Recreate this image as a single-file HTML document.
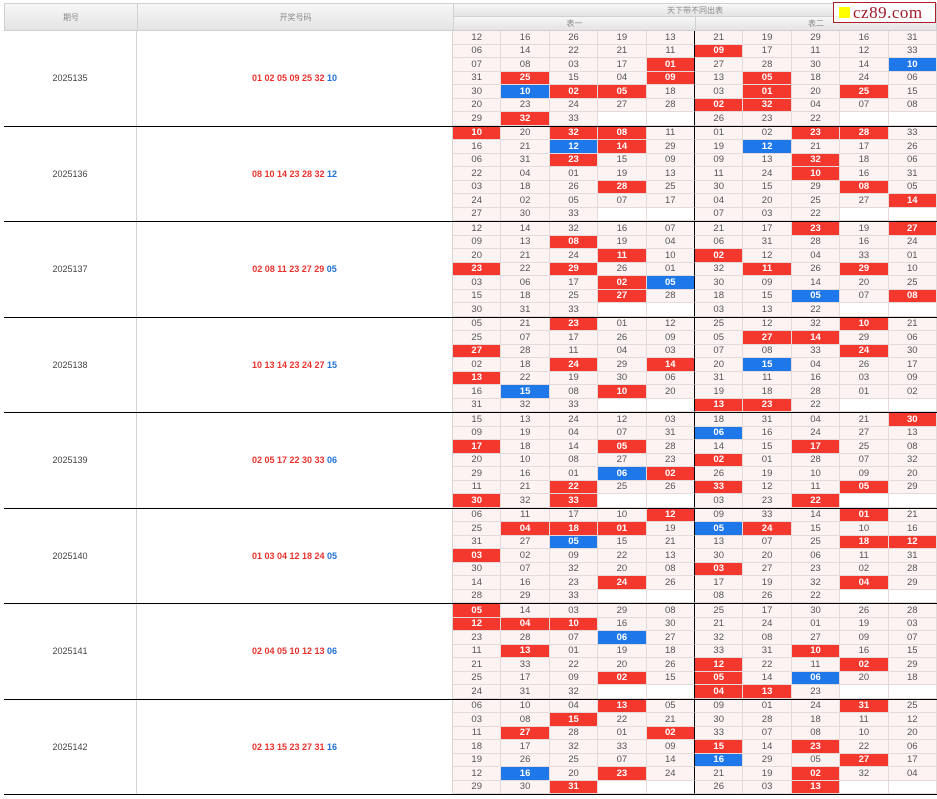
<!DOCTYPE html>
<html><head><meta charset="utf-8"><style>
*{box-sizing:border-box;margin:0;padding:0}
body{width:937px;height:799px;background:#fff;font-family:"Liberation Sans","Noto Sans CJK SC",sans-serif;position:relative;overflow:hidden}
.h{position:absolute;background:linear-gradient(#f7f7f7,#e4e4e4);border:1px solid #d0d0d0;color:#888;font-size:8px;display:flex;align-items:center;justify-content:center}
#wrap{position:absolute;left:4px;top:31px;width:933px}
.g{height:95.5px;border-bottom:1.5px solid #000;display:flex}
.p{width:133px;border-right:1px solid #d4d4d4;display:flex;align-items:center;justify-content:center;font-size:9px;color:#444}
.n{width:316px;border-right:1px solid #d4d4d4;display:flex;align-items:center;justify-content:center;font-size:9px;font-weight:bold;color:#e8322b}
.n b{color:#1f6fd6}
.d{width:484px;display:grid;grid-template-columns:repeat(10,1fr);grid-template-rows:repeat(7,1fr)}
.d i{font-style:normal;background:#fdf3f2;border-right:1px solid #e6d9d9;border-bottom:1px solid #e6d9d9;display:flex;align-items:center;justify-content:center;font-size:9.5px;color:#555}
.d i:nth-child(10n+5){border-right:1.5px solid #000}
.d i.r{background:#f5382e;color:#fff;font-weight:bold}
.d i.b{background:#1e78ea;color:#fff;font-weight:bold}
.d i.e{background:#fff}
#logo{position:absolute;left:833px;top:2px;width:103px;height:21px;border:1px solid #b01c2c;background:#fff;display:flex;align-items:center;padding-left:5px}
#logo span{display:inline-block;width:11px;height:11px;background:#ffff00;margin-right:3px}
#logo em{font-style:normal;font-family:"Liberation Serif",serif;font-size:17px;color:#a0192a;letter-spacing:0.5px}
</style></head><body>
<div class="h" style="left:4px;top:3px;width:134px;height:28px">期号</div>
<div class="h" style="left:137px;top:3px;width:317px;height:28px">开奖号码</div>
<div class="h" style="left:453px;top:3px;width:484px;height:14px">天下带不同出表</div>
<div class="h" style="left:453px;top:16px;width:243px;height:15px">表一</div>
<div class="h" style="left:695px;top:16px;width:242px;height:15px">表二</div>
<div id="logo"><span></span><em>cz89.com</em></div>
<div id="wrap">

<div class="g"><div class="p">2025135</div><div class="n">01 02 05 09 25 32&nbsp;<b>10</b></div><div class="d">
<i>12</i><i>16</i><i>26</i><i>19</i><i>13</i><i>21</i><i>19</i><i>29</i><i>16</i><i>31</i>
<i>06</i><i>14</i><i>22</i><i>21</i><i>11</i><i class="r">09</i><i>17</i><i>11</i><i>12</i><i>33</i>
<i>07</i><i>08</i><i>03</i><i>17</i><i class="r">01</i><i>27</i><i>28</i><i>30</i><i>14</i><i class="b">10</i>
<i>31</i><i class="r">25</i><i>15</i><i>04</i><i class="r">09</i><i>13</i><i class="r">05</i><i>18</i><i>24</i><i>06</i>
<i>30</i><i class="b">10</i><i class="r">02</i><i class="r">05</i><i>18</i><i>03</i><i class="r">01</i><i>20</i><i class="r">25</i><i>15</i>
<i>20</i><i>23</i><i>24</i><i>27</i><i>28</i><i class="r">02</i><i class="r">32</i><i>04</i><i>07</i><i>08</i>
<i>29</i><i class="r">32</i><i>33</i><i class="e"></i><i class="e"></i><i>26</i><i>23</i><i>22</i><i class="e"></i><i class="e"></i>
</div></div>

<div class="g"><div class="p">2025136</div><div class="n">08 10 14 23 28 32&nbsp;<b>12</b></div><div class="d">
<i class="r">10</i><i>20</i><i class="r">32</i><i class="r">08</i><i>11</i><i>01</i><i>02</i><i class="r">23</i><i class="r">28</i><i>33</i>
<i>16</i><i>21</i><i class="b">12</i><i class="r">14</i><i>29</i><i>19</i><i class="b">12</i><i>21</i><i>17</i><i>26</i>
<i>06</i><i>31</i><i class="r">23</i><i>15</i><i>09</i><i>09</i><i>13</i><i class="r">32</i><i>18</i><i>06</i>
<i>22</i><i>04</i><i>01</i><i>19</i><i>13</i><i>11</i><i>24</i><i class="r">10</i><i>16</i><i>31</i>
<i>03</i><i>18</i><i>26</i><i class="r">28</i><i>25</i><i>30</i><i>15</i><i>29</i><i class="r">08</i><i>05</i>
<i>24</i><i>02</i><i>05</i><i>07</i><i>17</i><i>04</i><i>20</i><i>25</i><i>27</i><i class="r">14</i>
<i>27</i><i>30</i><i>33</i><i class="e"></i><i class="e"></i><i>07</i><i>03</i><i>22</i><i class="e"></i><i class="e"></i>
</div></div>

<div class="g"><div class="p">2025137</div><div class="n">02 08 11 23 27 29&nbsp;<b>05</b></div><div class="d">
<i>12</i><i>14</i><i>32</i><i>16</i><i>07</i><i>21</i><i>17</i><i class="r">23</i><i>19</i><i class="r">27</i>
<i>09</i><i>13</i><i class="r">08</i><i>19</i><i>04</i><i>06</i><i>31</i><i>28</i><i>16</i><i>24</i>
<i>20</i><i>21</i><i>24</i><i class="r">11</i><i>10</i><i class="r">02</i><i>12</i><i>04</i><i>33</i><i>01</i>
<i class="r">23</i><i>22</i><i class="r">29</i><i>26</i><i>01</i><i>32</i><i class="r">11</i><i>26</i><i class="r">29</i><i>10</i>
<i>03</i><i>06</i><i>17</i><i class="r">02</i><i class="b">05</i><i>30</i><i>09</i><i>14</i><i>20</i><i>25</i>
<i>15</i><i>18</i><i>25</i><i class="r">27</i><i>28</i><i>18</i><i>15</i><i class="b">05</i><i>07</i><i class="r">08</i>
<i>30</i><i>31</i><i>33</i><i class="e"></i><i class="e"></i><i>03</i><i>13</i><i>22</i><i class="e"></i><i class="e"></i>
</div></div>

<div class="g"><div class="p">2025138</div><div class="n">10 13 14 23 24 27&nbsp;<b>15</b></div><div class="d">
<i>05</i><i>21</i><i class="r">23</i><i>01</i><i>12</i><i>25</i><i>12</i><i>32</i><i class="r">10</i><i>21</i>
<i>25</i><i>07</i><i>17</i><i>26</i><i>09</i><i>05</i><i class="r">27</i><i class="r">14</i><i>29</i><i>06</i>
<i class="r">27</i><i>28</i><i>11</i><i>04</i><i>03</i><i>07</i><i>08</i><i>33</i><i class="r">24</i><i>30</i>
<i>02</i><i>18</i><i class="r">24</i><i>29</i><i class="r">14</i><i>20</i><i class="b">15</i><i>04</i><i>26</i><i>17</i>
<i class="r">13</i><i>22</i><i>19</i><i>30</i><i>06</i><i>31</i><i>11</i><i>16</i><i>03</i><i>09</i>
<i>16</i><i class="b">15</i><i>08</i><i class="r">10</i><i>20</i><i>19</i><i>18</i><i>28</i><i>01</i><i>02</i>
<i>31</i><i>32</i><i>33</i><i class="e"></i><i class="e"></i><i class="r">13</i><i class="r">23</i><i>22</i><i class="e"></i><i class="e"></i>
</div></div>

<div class="g"><div class="p">2025139</div><div class="n">02 05 17 22 30 33&nbsp;<b>06</b></div><div class="d">
<i>15</i><i>13</i><i>24</i><i>12</i><i>03</i><i>18</i><i>31</i><i>04</i><i>21</i><i class="r">30</i>
<i>09</i><i>19</i><i>04</i><i>07</i><i>31</i><i class="b">06</i><i>16</i><i>24</i><i>27</i><i>13</i>
<i class="r">17</i><i>18</i><i>14</i><i class="r">05</i><i>28</i><i>14</i><i>15</i><i class="r">17</i><i>25</i><i>08</i>
<i>20</i><i>10</i><i>08</i><i>27</i><i>23</i><i class="r">02</i><i>01</i><i>28</i><i>07</i><i>32</i>
<i>29</i><i>16</i><i>01</i><i class="b">06</i><i class="r">02</i><i>26</i><i>19</i><i>10</i><i>09</i><i>20</i>
<i>11</i><i>21</i><i class="r">22</i><i>25</i><i>26</i><i class="r">33</i><i>12</i><i>11</i><i class="r">05</i><i>29</i>
<i class="r">30</i><i>32</i><i class="r">33</i><i class="e"></i><i class="e"></i><i>03</i><i>23</i><i class="r">22</i><i class="e"></i><i class="e"></i>
</div></div>

<div class="g"><div class="p">2025140</div><div class="n">01 03 04 12 18 24&nbsp;<b>05</b></div><div class="d">
<i>06</i><i>11</i><i>17</i><i>10</i><i class="r">12</i><i>09</i><i>33</i><i>14</i><i class="r">01</i><i>21</i>
<i>25</i><i class="r">04</i><i class="r">18</i><i class="r">01</i><i>19</i><i class="b">05</i><i class="r">24</i><i>15</i><i>10</i><i>16</i>
<i>31</i><i>27</i><i class="b">05</i><i>15</i><i>21</i><i>13</i><i>07</i><i>25</i><i class="r">18</i><i class="r">12</i>
<i class="r">03</i><i>02</i><i>09</i><i>22</i><i>13</i><i>30</i><i>20</i><i>06</i><i>11</i><i>31</i>
<i>30</i><i>07</i><i>32</i><i>20</i><i>08</i><i class="r">03</i><i>27</i><i>23</i><i>02</i><i>28</i>
<i>14</i><i>16</i><i>23</i><i class="r">24</i><i>26</i><i>17</i><i>19</i><i>32</i><i class="r">04</i><i>29</i>
<i>28</i><i>29</i><i>33</i><i class="e"></i><i class="e"></i><i>08</i><i>26</i><i>22</i><i class="e"></i><i class="e"></i>
</div></div>

<div class="g"><div class="p">2025141</div><div class="n">02 04 05 10 12 13&nbsp;<b>06</b></div><div class="d">
<i class="r">05</i><i>14</i><i>03</i><i>29</i><i>08</i><i>25</i><i>17</i><i>30</i><i>26</i><i>28</i>
<i class="r">12</i><i class="r">04</i><i class="r">10</i><i>16</i><i>30</i><i>21</i><i>24</i><i>01</i><i>19</i><i>03</i>
<i>23</i><i>28</i><i>07</i><i class="b">06</i><i>27</i><i>32</i><i>08</i><i>27</i><i>09</i><i>07</i>
<i>11</i><i class="r">13</i><i>01</i><i>19</i><i>18</i><i>33</i><i>31</i><i class="r">10</i><i>16</i><i>15</i>
<i>21</i><i>33</i><i>22</i><i>20</i><i>26</i><i class="r">12</i><i>22</i><i>11</i><i class="r">02</i><i>29</i>
<i>25</i><i>17</i><i>09</i><i class="r">02</i><i>15</i><i class="r">05</i><i>14</i><i class="b">06</i><i>20</i><i>18</i>
<i>24</i><i>31</i><i>32</i><i class="e"></i><i class="e"></i><i class="r">04</i><i class="r">13</i><i>23</i><i class="e"></i><i class="e"></i>
</div></div>

<div class="g"><div class="p">2025142</div><div class="n">02 13 15 23 27 31&nbsp;<b>16</b></div><div class="d">
<i>06</i><i>10</i><i>04</i><i class="r">13</i><i>05</i><i>09</i><i>01</i><i>24</i><i class="r">31</i><i>25</i>
<i>03</i><i>08</i><i class="r">15</i><i>22</i><i>21</i><i>30</i><i>28</i><i>18</i><i>11</i><i>12</i>
<i>11</i><i class="r">27</i><i>28</i><i>01</i><i class="r">02</i><i>33</i><i>07</i><i>08</i><i>10</i><i>20</i>
<i>18</i><i>17</i><i>32</i><i>33</i><i>09</i><i class="r">15</i><i>14</i><i class="r">23</i><i>22</i><i>06</i>
<i>19</i><i>26</i><i>25</i><i>07</i><i>14</i><i class="b">16</i><i>29</i><i>05</i><i class="r">27</i><i>17</i>
<i>12</i><i class="b">16</i><i>20</i><i class="r">23</i><i>24</i><i>21</i><i>19</i><i class="r">02</i><i>32</i><i>04</i>
<i>29</i><i>30</i><i class="r">31</i><i class="e"></i><i class="e"></i><i>26</i><i>03</i><i class="r">13</i><i class="e"></i><i class="e"></i>
</div></div>

</div>
</body></html>
